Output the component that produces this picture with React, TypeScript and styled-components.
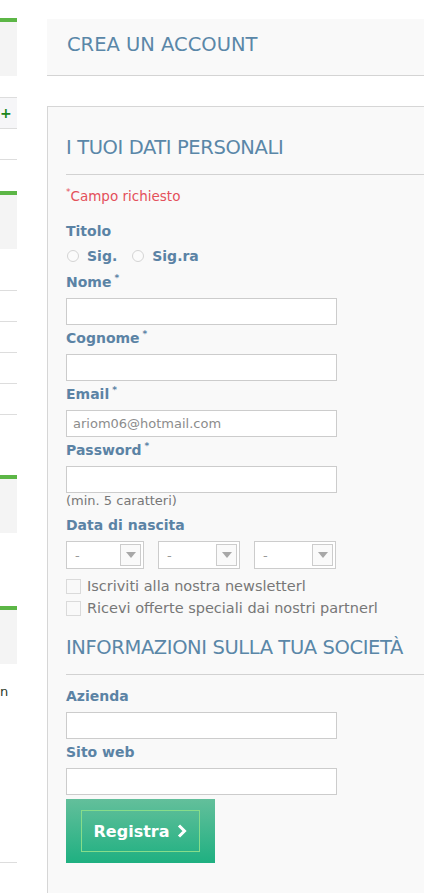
import React from "react";
import styled, { createGlobalStyle } from "styled-components";

const GlobalStyle = createGlobalStyle`
  html, body {
    margin: 0;
    padding: 0;
    background: #ffffff;
    overflow: hidden;
  }
  body {
    font-family: "DejaVu Sans", "Liberation Sans", sans-serif;
  }
`;

const Page = styled.div`
  display: flex;
  align-items: flex-start;
  gap: 30px;
  padding-top: 18px;
  width: 460px;
`;

/* ---------- left column (mostly cut off) ---------- */

const Sidebar = styled.aside`
  width: 17px;
  flex: none;
  display: flex;
  flex-flow: column;
  overflow: hidden;
`;

const BlockHead = styled.div<{ $top: number }>`
  margin-top: ${(p) => p.$top}px;
  height: 54px;
  border-top: 4px solid #5cb646;
  background: #f4f4f4;
`;

const ToggleRow = styled.div<{ $top: number }>`
  margin-top: ${(p) => p.$top}px;
  height: 30px;
  border-top: 1px solid #dddddd;
  border-bottom: 1px solid #dddddd;
  background: #f6f6f8;
  display: flex;
  align-items: center;
  color: #1c861c;
  font-weight: 900;
  font-size: 14px;
  line-height: 14px;
`;

const ListRow = styled.div<{ $top?: number }>`
  margin-top: ${(p) => p.$top ?? 0}px;
  height: 30px;
  border-bottom: 1px solid #dddddd;
`;

const SideText = styled.div<{ $top: number; $height: number }>`
  margin-top: ${(p) => p.$top}px;
  height: ${(p) => p.$height}px;
  border-bottom: 1px solid #dddddd;
  font-size: 13px;
  color: #2d3a2a;
  line-height: 20px;
`;

/* ---------- main column ---------- */

const Main = styled.main`
  flex: 1;
  display: flex;
  flex-flow: column;
`;

const PageHeader = styled.header`
  margin-top: 1px;
  padding: 14px 20px 18px;
  background: #f9f9f9;
  border-bottom: 1px solid #d4d4d4;
`;

const Title = styled.h1`
  margin: 0;
  font-family: "DejaVu Sans", sans-serif;
  font-weight: normal;
  font-size: 19.5px;
  line-height: 24px;
  color: #5a87a8;
`;

const FormBox = styled.form`
  margin-top: 30px;
  padding: 29px 0 40px 18px;
  background: #f9f9f9;
  border: 1px solid #d6d6d6;
  border-right: none;
  display: flex;
  flex-flow: column;
`;

const SectionTitle = styled.h2<{ $top?: number }>`
  margin: ${(p) => p.$top ?? 0}px 0 0;
  padding-bottom: 14px;
  border-bottom: 1px solid #d2d2d2;
  font-family: "DejaVu Sans", sans-serif;
  font-weight: normal;
  font-size: 19.5px;
  line-height: 24px;
  color: #5a87a8;
  letter-spacing: -0.4px;
`;

const Star = styled.span`
  font-size: 9px;
  line-height: 0;
  position: relative;
  top: -6px;
`;

const Required = styled.p`
  margin: 13px 0 0;
  font-size: 13.5px;
  line-height: 16px;
  color: #e4505b;
`;

const Label = styled.label<{ $top?: number }>`
  display: block;
  margin-top: ${(p) => p.$top ?? 3}px;
  font-size: 14px;
  line-height: 20px;
  font-weight: bold;
  color: #5b83a5;
  & ${Star} {
    margin-left: 3px;
  }
`;

const RadioRow = styled.div`
  margin-top: 5px;
  display: flex;
  align-items: center;
  height: 20px;
  font-size: 14px;
  font-weight: bold;
  color: #5b83a5;
`;

const RadioDot = styled.span`
  width: 10px;
  height: 10px;
  border: 1px solid #d4d4d4;
  border-radius: 50%;
  background: #fbfbfb;
  margin: 0 8px 0 1px;
`;

const RadioText = styled.span`
  margin-right: 14px;
`;

const TextInput = styled.input`
  display: block;
  box-sizing: border-box;
  margin-top: 6px;
  width: 271px;
  height: 27px;
  padding: 0 6px;
  border: 1px solid #cccccc;
  background: #ffffff;
  font-family: "DejaVu Sans", sans-serif;
  font-size: 13px;
  color: #8c8c8c;
  outline: none;
`;

const Hint = styled.p`
  margin: 0;
  font-size: 13px;
  line-height: 16px;
  color: #777777;
`;

const SelectRow = styled.div`
  margin-top: 6px;
  display: flex;
  gap: 14px;
`;

const SelectBox = styled.div<{ $width: number }>`
  box-sizing: border-box;
  width: ${(p) => p.$width}px;
  height: 28px;
  border: 1px solid #cccccc;
  background: #ffffff;
  display: flex;
  align-items: center;
  justify-content: space-between;
  padding: 2px 2px 2px 8px;
  font-size: 13px;
  color: #999999;
`;

const ArrowBox = styled.span`
  box-sizing: border-box;
  width: 21px;
  height: 22px;
  border: 1px solid #cccccc;
  background: #fafafa;
  display: flex;
  align-items: center;
  justify-content: center;
`;

const CheckRow = styled.div<{ $top?: number }>`
  margin-top: ${(p) => p.$top ?? 0}px;
  height: 22px;
  display: flex;
  align-items: center;
  font-size: 14.5px;
  color: #777777;
  white-space: nowrap;
`;

const CheckBox = styled.span`
  width: 13px;
  height: 13px;
  border: 1px solid #dadada;
  background: #f9f9f9;
  margin-right: 6px;
  flex: none;
`;

const SubmitButton = styled.button`
  margin-top: 4px;
  width: 149px;
  height: 64px;
  padding: 11px 15px;
  border: none;
  background: linear-gradient(#63bf9b, #1fb081);
  cursor: pointer;
`;

const ButtonInner = styled.span`
  box-sizing: border-box;
  height: 100%;
  display: flex;
  align-items: center;
  justify-content: center;
  gap: 8px;
  border: 1px solid #86dd8a;
  color: #ffffff;
  font-family: "DejaVu Sans", sans-serif;
  font-weight: bold;
  font-size: 16px;
`;

const Arrow = () => (
  <svg width="10" height="6" viewBox="0 0 10 6">
    <path d="M0 0 H10 L5 6 Z" fill="#a8a8a8" />
  </svg>
);

const Chevron = () => (
  <svg width="10" height="14" viewBox="0 0 10 14">
    <path d="M2 1.5 L7.5 7 L2 12.5" stroke="#ffffff" strokeWidth="3" fill="none" />
  </svg>
);

type FieldProps = { label: string; required?: boolean; value?: string; top?: number };

const Field = ({ label, required, value, top }: FieldProps) => (
  <>
    <Label $top={top}>
      {label}
      {required && <Star>*</Star>}
    </Label>
    <TextInput defaultValue={value} />
  </>
);

const selects = [78, 82, 82];

const App = () => (
  <>
    <GlobalStyle />
    <Page>
      <Sidebar>
        <BlockHead $top={0} />
        <ToggleRow $top={21}>+</ToggleRow>
        <ListRow />
        <BlockHead $top={31} />
        <ListRow $top={11} />
        <ListRow />
        <ListRow />
        <ListRow />
        <ListRow />
        <BlockHead $top={60} />
        <BlockHead $top={73} />
        <SideText $top={18} $height={180}>
          n
        </SideText>
      </Sidebar>

      <Main>
        <PageHeader>
          <Title>CREA UN ACCOUNT</Title>
        </PageHeader>

        <FormBox onSubmit={(e) => e.preventDefault()}>
          <SectionTitle>I TUOI DATI PERSONALI</SectionTitle>
          <Required>
            <Star>*</Star>Campo richiesto
          </Required>

          <Label $top={17}>Titolo</Label>
          <RadioRow>
            <RadioDot />
            <RadioText>Sig.</RadioText>
            <RadioDot />
            <RadioText>Sig.ra</RadioText>
          </RadioRow>

          <Field label="Nome" required top={6} />
          <Field label="Cognome" required />
          <Field label="Email" required value="ariom06@hotmail.com" />
          <Field label="Password" required />
          <Hint>(min. 5 caratteri)</Hint>

          <Label $top={6}>Data di nascita</Label>
          <SelectRow>
            {selects.map((w, i) => (
              <SelectBox key={i} $width={w}>
                -
                <ArrowBox>
                  <Arrow />
                </ArrowBox>
              </SelectBox>
            ))}
          </SelectRow>

          <CheckRow $top={6}>
            <CheckBox />
            Iscriviti alla nostra newsletterl
          </CheckRow>
          <CheckRow>
            <CheckBox />
            Ricevi offerte speciali dai nostri partnerl
          </CheckRow>

          <SectionTitle $top={17}>INFORMAZIONI SULLA TUA SOCIETÀ</SectionTitle>
          <Field label="Azienda" top={11} />
          <Field label="Sito web" />

          <SubmitButton type="submit">
            <ButtonInner>
              Registra
              <Chevron />
            </ButtonInner>
          </SubmitButton>
        </FormBox>
      </Main>
    </Page>
  </>
);

export default App;
